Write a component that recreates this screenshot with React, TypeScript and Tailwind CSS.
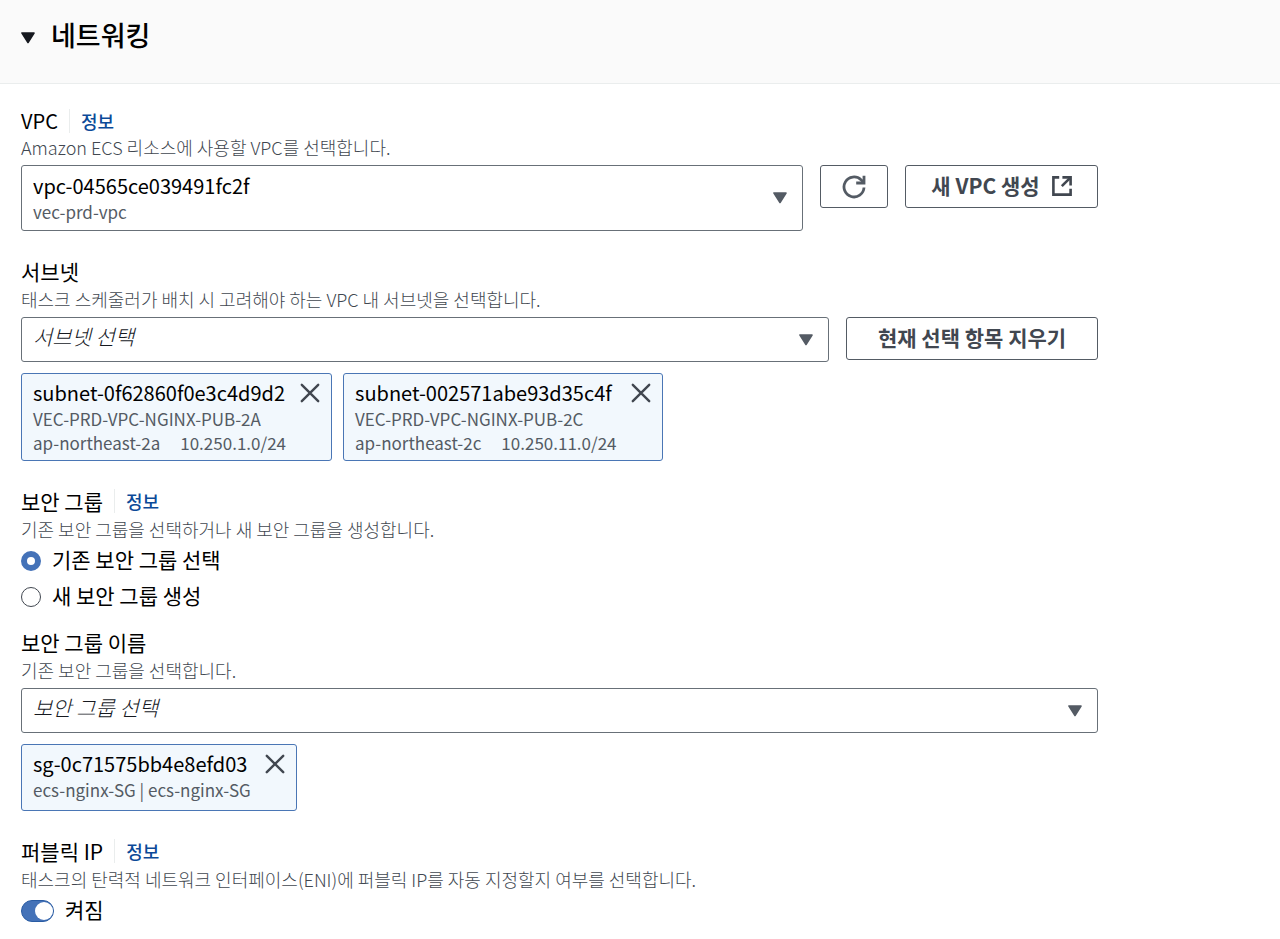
import { useState, type ReactNode } from "react";

const Caret = ({ className = "text-[#545b64]" }: { className?: string }) => (
  <svg
    viewBox="0 0 14 12"
    className={`pointer-events-none h-3 w-3.5 shrink-0 ${className}`}
    aria-hidden="true"
  >
    <path
      d="M1 1h12L7 10.5z"
      fill="currentColor"
      stroke="currentColor"
      strokeWidth="1.6"
      strokeLinejoin="round"
    />
  </svg>
);

const RefreshIcon = () => (
  <svg
    viewBox="0 0 24 24"
    className="size-6"
    fill="none"
    stroke="currentColor"
    strokeWidth="2.8"
    aria-hidden="true"
  >
    <path d="M22 12.5A10 10 0 1 1 19 4.8L21.6 7.2" />
    <path d="M22 .8v7.2h-7.8" />
  </svg>
);

const ExternalIcon = () => (
  <svg
    viewBox="0 0 20 20"
    className="size-5"
    fill="none"
    stroke="currentColor"
    strokeWidth="2.6"
    aria-hidden="true"
  >
    <path d="M7.2 1.4H1.4v17.2h17.2V12.8" />
    <path d="M10.4 1.4h8.2v8.2" />
    <path d="M18.4 1.6l-8.6 8.6" />
  </svg>
);

const CloseIcon = () => (
  <svg
    viewBox="0 0 20 20"
    className="size-5"
    fill="none"
    stroke="currentColor"
    strokeWidth="2.4"
    strokeLinecap="round"
    aria-hidden="true"
  >
    <path d="M1.8 1.8l16.4 16.4M18.2 1.8L1.8 18.2" />
  </svg>
);

const InfoLink = () => (
  <a
    href="#info"
    className="ml-[11px] border-l border-[#eaeded] pl-[11px] text-[18px] leading-6 font-medium text-[#0b4a98]"
  >
    정보
  </a>
);

const Hint = ({ id, children }: { id: string; children: ReactNode }) => (
  <p
    id={id}
    className="mb-1.5 text-[18px] leading-6 font-light text-[#414750]"
  >
    {children}
  </p>
);

const ActionButton = ({
  className,
  children,
}: {
  className: string;
  children: ReactNode;
}) => (
  <button
    type="button"
    className={`flex h-[43px] items-center justify-center gap-3 rounded-[3px] border border-[#545b64] pb-0.5 text-[21px] font-bold text-[#414750] ${className}`}
  >
    {children}
  </button>
);

const EmptySelect = ({
  id,
  placeholder,
}: {
  id: string;
  placeholder: string;
}) => (
  <div className="flex h-[45px] flex-1 items-center rounded-[3px] border border-[#687078] pr-[15px]">
    <select
      id={id}
      aria-describedby={`${id}-hint`}
      className="h-full flex-1 appearance-none bg-transparent pb-1.5 pl-[11px] text-[21px] font-light text-[#16191f] italic outline-none"
    >
      <option>{placeholder}</option>
    </select>
    <Caret />
  </div>
);

const Token = ({ name, children }: { name: string; children: ReactNode }) => (
  <li className="flex min-h-[67px] items-start gap-3.5 rounded-[3px] border border-[#4a76b5] bg-[#f2f8fd] px-[11px] py-[5px]">
    <div>
      <p className="text-[20px] leading-7 text-black">{name}</p>
      <div className="text-[17px] leading-6 text-[#545b64]">{children}</div>
    </div>
    <button type="button" aria-label={name} className="mt-1 text-[#414750]">
      <CloseIcon />
    </button>
  </li>
);

const subnets = [
  {
    id: "subnet-0f62860f0e3c4d9d2",
    name: "VEC-PRD-VPC-NGINX-PUB-2A",
    zone: "ap-northeast-2a",
    cidr: "10.250.1.0/24",
  },
  {
    id: "subnet-002571abe93d35c4f",
    name: "VEC-PRD-VPC-NGINX-PUB-2C",
    zone: "ap-northeast-2c",
    cidr: "10.250.11.0/24",
  },
];

const groupModes = [
  { value: "existing", label: "기존 보안 그룹 선택" },
  { value: "new", label: "새 보안 그룹 생성" },
];

export default function App() {
  const [mode, setMode] = useState("existing");
  const [publicIp, setPublicIp] = useState(true);

  return (
    <main className="min-h-screen bg-white font-['Noto_Sans_CJK_KR',sans-serif] text-black">
      <header className="border-b border-[#eaeded] bg-[#fafafa] pt-[15px] pr-5 pb-7 pl-[21px]">
        <h2>
          <button
            type="button"
            aria-expanded="true"
            className="flex items-center gap-4 text-[27px] leading-10 font-medium"
          >
            <Caret className="mt-1.5 text-[#16191f]" />
            네트워킹
          </button>
        </h2>
      </header>

      <form className="flex max-w-[1118px] flex-col gap-7 pt-[23px] pr-5 pl-[21px]">
        <div>
          <div className="flex items-center text-[20px] leading-7">
            <label htmlFor="vpc">VPC</label>
            <InfoLink />
          </div>
          <Hint id="vpc-hint">Amazon ECS 리소스에 사용할 VPC를 선택합니다.</Hint>
          <div className="flex items-start gap-[17px]">
            <div className="flex h-[66px] flex-1 items-center rounded-[3px] border border-[#687078] pr-[15px]">
              <div className="flex-1">
                <select
                  id="vpc"
                  aria-describedby="vpc-hint"
                  className="block h-7 w-full appearance-none bg-transparent pl-[11px] text-[20px] leading-7 outline-none"
                >
                  <option>vpc-04565ce039491fc2f</option>
                </select>
                <p className="pl-[11px] text-[17px] leading-6 text-[#545b64]">
                  vec-prd-vpc
                </p>
              </div>
              <Caret />
            </div>
            <button
              type="button"
              aria-label="VPC"
              className="flex h-[43px] w-[68px] items-center justify-center rounded-[3px] border border-[#545b64] text-[#545b64]"
            >
              <RefreshIcon />
            </button>
            <ActionButton className="min-w-[193px]">
              새 VPC 생성
              <ExternalIcon />
            </ActionButton>
          </div>
        </div>

        <div>
          <label htmlFor="subnet" className="block pb-1 text-[21px] leading-6">
            서브넷
          </label>
          <Hint id="subnet-hint">
            태스크 스케줄러가 배치 시 고려해야 하는 VPC 내 서브넷을 선택합니다.
          </Hint>
          <div className="flex items-start gap-[17px]">
            <EmptySelect id="subnet" placeholder="서브넷 선택" />
            <ActionButton className="min-w-[252px]">
              현재 선택 항목 지우기
            </ActionButton>
          </div>
          <ul className="mt-[11px] flex flex-wrap gap-[11px]">
            {subnets.map((subnet) => (
              <Token key={subnet.id} name={subnet.id}>
                <p>{subnet.name}</p>
                <p className="flex gap-5">
                  <span>{subnet.zone}</span>
                  <span>{subnet.cidr}</span>
                </p>
              </Token>
            ))}
          </ul>
        </div>

        <div>
          <div role="radiogroup" aria-labelledby="group-label">
            <div className="flex items-center pb-1 text-[21px] leading-6">
              <span id="group-label">보안 그룹</span>
              <InfoLink />
            </div>
            <Hint id="group-hint">
              기존 보안 그룹을 선택하거나 새 보안 그룹을 생성합니다.
            </Hint>
            <div className="flex flex-col items-start gap-2">
              {groupModes.map(({ value, label }) => (
                <label
                  key={value}
                  className="flex items-center gap-[11px] text-[21px] leading-6"
                >
                  <input
                    type="radio"
                    name="group-mode"
                    value={value}
                    checked={mode === value}
                    onChange={() => setMode(value)}
                    className="size-5 appearance-none rounded-full border border-[#414750] bg-white checked:border-[6px] checked:border-[#4472b8]"
                  />
                  <span className="pb-1">{label}</span>
                </label>
              ))}
            </div>
          </div>

          <div className="mt-[19px]">
            <label htmlFor="group" className="block pb-1 text-[21px] leading-6">
              보안 그룹 이름
            </label>
            <Hint id="group-hint-name">기존 보안 그룹을 선택합니다.</Hint>
            <div className="flex">
              <EmptySelect id="group" placeholder="보안 그룹 선택" />
            </div>
            <ul className="mt-[11px] flex flex-wrap gap-[11px]">
              <Token name="sg-0c71575bb4e8efd03">ecs-nginx-SG | ecs-nginx-SG</Token>
            </ul>
          </div>
        </div>

        <div>
          <div className="flex items-center pb-1 text-[21px] leading-6">
            <label htmlFor="public-ip">퍼블릭 IP</label>
            <InfoLink />
          </div>
          <Hint id="ip-hint">
            태스크의 탄력적 네트워크 인터페이스(ENI)에 퍼블릭 IP를 자동 지정할지
            여부를 선택합니다.
          </Hint>
          <label className="inline-flex items-center gap-[11px] text-[21px] leading-6">
            <input
              id="public-ip"
              type="checkbox"
              role="switch"
              checked={publicIp}
              onChange={() => setPublicIp(!publicIp)}
              aria-describedby="ip-hint"
              className="flex h-[22px] w-[33px] appearance-none items-center rounded-full border border-[#545b64] bg-[#687078] before:size-[18px] before:rounded-full before:bg-white checked:justify-end checked:border-[#2a5ca3] checked:bg-[#4472b8]"
            />
            <span className="pb-1">켜짐</span>
          </label>
        </div>
      </form>
    </main>
  );
}
